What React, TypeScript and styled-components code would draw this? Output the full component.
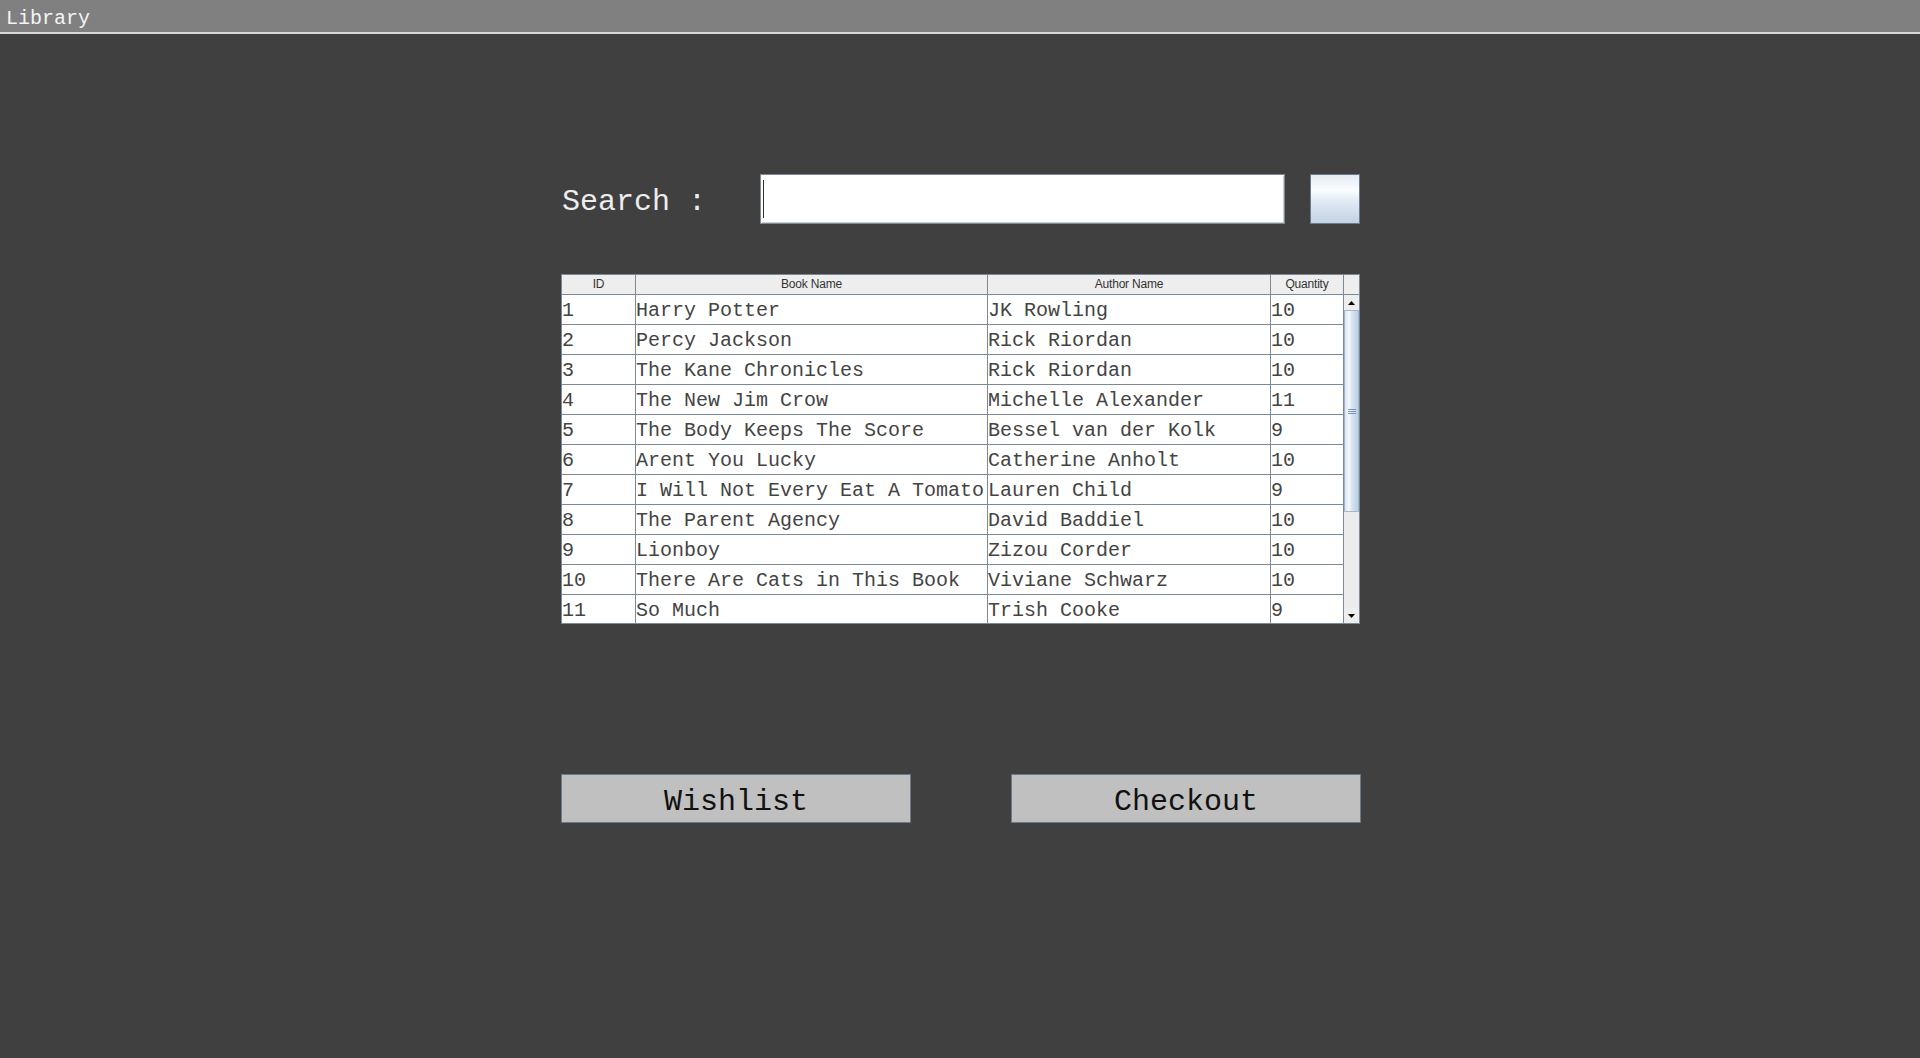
import React from 'react'
import styled, { createGlobalStyle } from 'styled-components'

const GlobalStyle = createGlobalStyle`
	html, body {
		margin: 0;
		padding: 0;
		height: 100%;
		background: #404040;
	}
	#root {
		min-height: 100%;
	}
`

const books = [
	{ id: 1, name: 'Harry Potter', author: 'JK Rowling', qty: 10 },
	{ id: 2, name: 'Percy Jackson', author: 'Rick Riordan', qty: 10 },
	{ id: 3, name: 'The Kane Chronicles', author: 'Rick Riordan', qty: 10 },
	{ id: 4, name: 'The New Jim Crow', author: 'Michelle Alexander', qty: 11 },
	{ id: 5, name: 'The Body Keeps The Score', author: 'Bessel van der Kolk', qty: 9 },
	{ id: 6, name: 'Arent You Lucky', author: 'Catherine Anholt', qty: 10 },
	{ id: 7, name: 'I Will Not Every Eat A Tomato', author: 'Lauren Child', qty: 9 },
	{ id: 8, name: 'The Parent Agency', author: 'David Baddiel', qty: 10 },
	{ id: 9, name: 'Lionboy', author: 'Zizou Corder', qty: 10 },
	{ id: 10, name: 'There Are Cats in This Book', author: 'Viviane Schwarz', qty: 10 },
	{ id: 11, name: 'So Much', author: 'Trish Cooke', qty: 9 },
]

const columns = '74px 352px 283px 73px'

const App: React.FC = () => {
	return (
		<>
			<GlobalStyle />
			<StyledWindow>
				<StyledTitleBar>Library</StyledTitleBar>
				<StyledContent>
					<StyledColumn>
						<StyledSearchRow>
							<StyledSearchLabel>Search :</StyledSearchLabel>
							<StyledSearchInput />
							<StyledSearchButton />
						</StyledSearchRow>

						<StyledTableFrame>
							<StyledTableMain>
								<StyledHeaderRow>
									<StyledHeaderCell>ID</StyledHeaderCell>
									<StyledHeaderCell>Book Name</StyledHeaderCell>
									<StyledHeaderCell>Author Name</StyledHeaderCell>
									<StyledHeaderCell>Quantity</StyledHeaderCell>
								</StyledHeaderRow>
								<StyledBody>
									{books.map((b) => (
										<StyledRow key={b.id}>
											<StyledCell>{b.id}</StyledCell>
											<StyledCell>{b.name}</StyledCell>
											<StyledCell>{b.author}</StyledCell>
											<StyledCell>{b.qty}</StyledCell>
										</StyledRow>
									))}
								</StyledBody>
							</StyledTableMain>
							<StyledScrollColumn>
								<StyledScrollCorner />
								<StyledScrollTrack>
									<StyledArrowButton>
										<svg width="7" height="4" viewBox="0 0 7 4">
											<polygon points="0,4 7,4 3.5,0" fill="#000" />
										</svg>
									</StyledArrowButton>
									<StyledThumb>
										<StyledGrip />
									</StyledThumb>
									<StyledTrackRest />
									<StyledArrowButton>
										<svg width="7" height="4" viewBox="0 0 7 4">
											<polygon points="0,0 7,0 3.5,4" fill="#000" />
										</svg>
									</StyledArrowButton>
								</StyledScrollTrack>
							</StyledScrollColumn>
						</StyledTableFrame>

						<StyledActions>
							<StyledActionButton>Wishlist</StyledActionButton>
							<StyledActionButton>Checkout</StyledActionButton>
						</StyledActions>
					</StyledColumn>
				</StyledContent>
			</StyledWindow>
		</>
	)
}

const StyledWindow = styled.div`
	display: flex;
	flex-direction: column;
	min-height: 1058px;
	background: #404040;
`

const StyledTitleBar = styled.div`
	box-sizing: border-box;
	height: 34px;
	background: #808080;
	border-bottom: 2px solid #d8d8d8;
	padding: 7px 0 0 6px;
	color: #f4f4f4;
	font-family: 'Liberation Mono', 'Courier New', monospace;
	font-size: 20px;
	line-height: 24px;
`

const StyledContent = styled.div`
	display: flex;
	justify-content: center;
	padding-top: 140px;
`

const StyledColumn = styled.div`
	display: flex;
	flex-direction: column;
	width: 799px;
	margin-left: 1px;
`

const StyledSearchRow = styled.div`
	display: flex;
	align-items: center;
	height: 50px;
`

const StyledSearchLabel = styled.div`
	width: 199px;
	padding-left: 1px;
	padding-top: 6px;
	box-sizing: border-box;
	color: #ededed;
	font-family: 'Liberation Mono', 'Courier New', monospace;
	font-size: 30px;
`

const StyledSearchInput = styled.div`
	width: 525px;
	height: 50px;
	box-sizing: border-box;
	background: #fff;
	border: 1px solid #7d8b98;
	box-shadow: inset 1px 1px 0 #fff, inset -1px -1px 0 #c8d0d8;
	position: relative;
	&::before {
		content: '';
		position: absolute;
		left: 2px;
		top: 5px;
		bottom: 5px;
		width: 1px;
		background: #333;
	}
`

const StyledSearchButton = styled.div`
	width: 50px;
	height: 50px;
	margin-left: 25px;
	box-sizing: border-box;
	border: 1px solid #6c7c8c;
	background: linear-gradient(to bottom, #e2ebf4 0%, #fbfdfe 32%, #e0e9f3 55%, #c2d3e6 100%);
`

const StyledTableFrame = styled.div`
	display: flex;
	margin-top: 50px;
	width: 799px;
	height: 350px;
	box-sizing: border-box;
	border: 1px solid #7a8a99;
	background: #fff;
`

const StyledTableMain = styled.div`
	display: flex;
	flex-direction: column;
	width: 782px;
	overflow: hidden;
`

const StyledHeaderRow = styled.div`
	display: grid;
	grid-template-columns: ${columns};
	height: 20px;
	flex-shrink: 0;
	background: #eeeeee;
`

const StyledHeaderCell = styled.div`
	box-sizing: border-box;
	border-right: 1px solid #7a8a99;
	border-bottom: 1px solid #7a8a99;
	text-align: center;
	color: #333;
	font-family: 'Liberation Sans', Arial, sans-serif;
	font-size: 12px;
	line-height: 19px;
	letter-spacing: -0.2px;
`

const StyledBody = styled.div`
	flex: 1;
	overflow: hidden;
`

const StyledRow = styled.div`
	display: grid;
	grid-template-columns: ${columns};
	height: 30px;
`

const StyledCell = styled.div`
	box-sizing: border-box;
	border-right: 1px solid #7a8a99;
	border-bottom: 1px solid #7a8a99;
	padding: 3px 0 0 0;
	overflow: hidden;
	white-space: nowrap;
	color: #444;
	font-family: 'Liberation Mono', 'Courier New', monospace;
	font-size: 20px;
	line-height: 26px;
`

const StyledScrollColumn = styled.div`
	display: flex;
	flex-direction: column;
	width: 15px;
	background: #eeeeee;
`

const StyledScrollCorner = styled.div`
	height: 20px;
	box-sizing: border-box;
	border-bottom: 1px solid #7a8a99;
	background: #eeeeee;
	flex-shrink: 0;
`

const StyledScrollTrack = styled.div`
	flex: 1;
	display: flex;
	flex-direction: column;
	background: #ececec;
`

const StyledArrowButton = styled.div`
	height: 15px;
	display: flex;
	align-items: center;
	justify-content: center;
	background: #eeeeee;
	flex-shrink: 0;
`

const StyledThumb = styled.div`
	height: 202px;
	box-sizing: border-box;
	border: 1px solid #a3b7cc;
	background: linear-gradient(to right, #dbe6f2 0%, #f5f9fc 30%, #d3e1ef 60%, #bccfe4 100%);
	display: flex;
	align-items: center;
	justify-content: center;
`

const StyledGrip = styled.div`
	width: 8px;
	height: 5px;
	background: repeating-linear-gradient(to bottom, #7b95b3 0px, #7b95b3 1px, transparent 1px, transparent 2px);
`

const StyledTrackRest = styled.div`
	flex: 1;
	background: #ececec;
`

const StyledActions = styled.div`
	display: flex;
	justify-content: space-between;
	margin-top: 150px;
	width: 800px;
`

const StyledActionButton = styled.div`
	width: 350px;
	height: 49px;
	box-sizing: border-box;
	background: #c0c0c0;
	border: 1px solid #6a7a8a;
	display: flex;
	align-items: center;
	justify-content: center;
	color: #111;
	font-family: 'Liberation Mono', 'Courier New', monospace;
	font-size: 30px;
	padding-top: 6px;
`

export default App
